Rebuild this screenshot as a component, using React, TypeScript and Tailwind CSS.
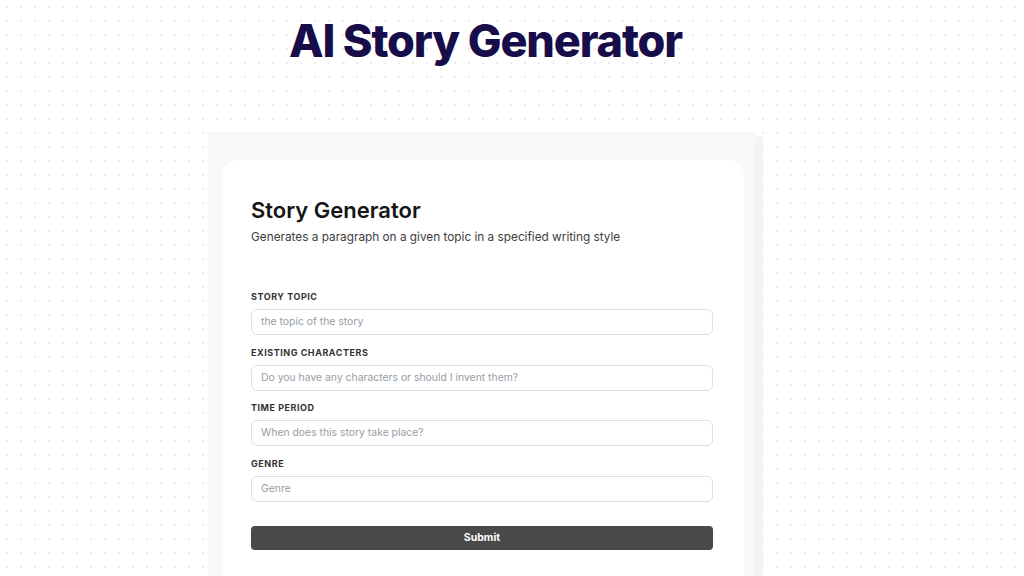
import React from "react";

const fields = [
  { label: "STORY TOPIC", placeholder: "the topic of the story" },
  { label: "EXISTING CHARACTERS", placeholder: "Do you have any characters or should I invent them?" },
  { label: "TIME PERIOD", placeholder: "When does this story take place?" },
  { label: "GENRE", placeholder: "Genre" },
];

export default function App() {
  return (
    <div
      className="w-[1024px] h-[576px] overflow-hidden bg-white bg-[radial-gradient(#ebebeb_1px,transparent_1.2px)] bg-size-[14px_14px]"
      style={{ fontFamily: "Inter, 'Noto Sans', sans-serif" }}
    >
      <div className="ml-[208px] w-[555px] flex flex-col">
        <h1 className="mt-[19px] text-center text-[45px] leading-[44px] font-extrabold tracking-[-0.025em] text-[#160d4a]">
          AI Story Generator
        </h1>
        <div className="mt-[69px] flex">
          <div className="w-[547px] bg-[#f6f8fa] pt-[28px] pl-[14px] pr-[11px] h-[500px]">
            <div className="bg-white rounded-2xl pl-[29px] pr-[31px] pt-[36px] pb-[40px]">
              <h2 className="text-[22px] leading-[28px] font-semibold text-[#151515]">Story Generator</h2>
              <p className="mt-[4px] text-[11.8px] leading-[18px] text-[#3d3d3d]">
                Generates a paragraph on a given topic in a specified writing style
              </p>
              <div className="mt-[45px] flex flex-col gap-[11.5px]">
                {fields.map((f) => (
                  <div key={f.label} className="flex flex-col">
                    <label className="text-[9px] leading-[12px] font-bold tracking-[0.06em] text-[#333]">
                      {f.label}
                    </label>
                    <div className="mt-[6px] h-[26px] rounded-[6px] border border-[#dcdfe3] flex items-center px-[9px]">
                      <span className="text-[10.4px] text-[#979da6]">{f.placeholder}</span>
                    </div>
                  </div>
                ))}
              </div>
              <button className="mt-[24px] w-full h-[24px] rounded-[4px] bg-[#4a4a4a] text-white text-[10.5px] font-bold">
                Submit
              </button>
            </div>
          </div>
          <div className="mt-[4px] w-[8px] h-[500px] bg-[#f3f3f4] rounded-t-[4px]" />
        </div>
      </div>
    </div>
  );
}
